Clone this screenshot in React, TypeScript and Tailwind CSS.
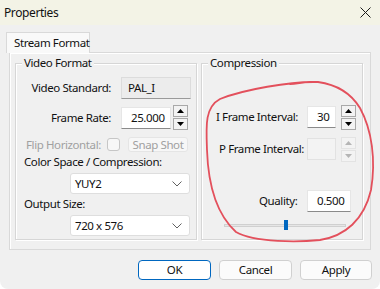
import React from "react";

function Spin({ disabled = false }: { disabled?: boolean }) {
  const box = disabled
    ? "border-[#e3e3e3] bg-[#f3f3f3]"
    : "border-[#a9a9a9] bg-[#f3f3f3]";
  const tri = disabled ? "#b5b5b5" : "#000000";
  return (
    <div className="flex flex-col gap-[1px] w-[15px]">
      <div className={`h-[12px] border flex items-center justify-center ${box}`}>
        <svg width="7" height="4" viewBox="0 0 7 4"><path d="M3.5 0 L7 4 L0 4 Z" fill={tri} /></svg>
      </div>
      <div className={`h-[12px] border flex items-center justify-center ${box}`}>
        <svg width="7" height="4" viewBox="0 0 7 4"><path d="M0 0 L7 0 L3.5 4 Z" fill={tri} /></svg>
      </div>
    </div>
  );
}

function Edit({ value, w, disabled = false }: { value?: string; w: string; disabled?: boolean }) {
  return (
    <div
      className={`${w} h-[22px] flex items-center pl-[9px] border ${
        disabled
          ? "bg-[#f3f3f3] border-[#e2e2e2]"
          : "bg-white border-[#e6e6e6] border-b-[#8a8a8a]"
      }`}
    >
      {value}
    </div>
  );
}

function Select({ value }: { value: string }) {
  return (
    <div className="ml-[54px] w-[120px] h-[21px] bg-white border border-[#dedede] rounded-[3px] flex items-center justify-between pl-[4px] pr-[7px]">
      <span>{value}</span>
      <svg width="10" height="6" viewBox="0 0 10 6" fill="none" stroke="#606060" strokeWidth="1">
        <path d="M0.5 0.5 L5 5 L9.5 0.5" />
      </svg>
    </div>
  );
}

function Group({ title, className, children }: { title: string; className: string; children: React.ReactNode }) {
  return (
    <div className={`relative border border-[#d6d6d6] shadow-[inset_1px_1px_0_#ffffff,1px_1px_0_#ffffff] ${className}`}>
      <span className="absolute -top-[9px] left-[6px] px-[2px] bg-[#f0f0f0] leading-[16px]">{title}</span>
      {children}
    </div>
  );
}

export default function App() {
  return (
    <div className="w-[380px] h-[289px] bg-[#f0f0f0] font-['Noto_Sans',sans-serif] text-[11.5px] tracking-[-0.4px] whitespace-nowrap text-[#111] relative overflow-hidden rounded-b-[8px]">
      <div className="h-[25px] bg-[#f3f3e6] flex items-center justify-between pl-[4px] pr-[9px]">
        <span className="text-[12px]">Properties</span>
        <svg width="11" height="11" viewBox="0 0 11 11" stroke="#1a1a1a" strokeWidth="1">
          <path d="M0.5 0.5 L10.5 10.5 M10.5 0.5 L0.5 10.5" />
        </svg>
      </div>

      <div className="pl-[6px] pt-[7px]">
        <div className="w-[84px] h-[21px] bg-[#f9f9f9] border border-b-0 border-[#d9d9d9] flex items-center pl-[7px] relative z-10">
          Stream Format
        </div>
        <div className="ml-[3px] -mt-[1px] w-[362px] h-[198px] border border-[#d9d9d9] shadow-[inset_1px_1px_0_#ffffff] flex gap-[4px] pl-[5px] pt-[10px]">
          <Group title="Video Format" className="w-[182px] h-[177px]">
            <div className="flex flex-col">
              <div className="mt-[13px] h-[22px] flex items-center">
                <span className="w-[95px] text-right">Video Standard:</span>
                <div className="ml-[10px] w-[70px] h-[22px] bg-[#ececec] border border-[#dcdcdc] border-b-[#9a9a9a] flex items-center pl-[6px]">
                  PAL_I
                </div>
              </div>
              <div className="mt-[6px] h-[25px] flex items-center">
                <span className="w-[95px] text-right">Frame Rate:</span>
                <div className="ml-[10px]">
                  <Edit value="25.000" w="w-[50px]" />
                </div>
                <div className="ml-[2px]">
                  <Spin />
                </div>
              </div>
              <div className="mt-[7px] h-[15px] flex items-center text-[#a0a0a0]">
                <span className="ml-[10px] w-[81px]">Flip Horizontal:</span>
                <div className="w-[13px] h-[13px] bg-[#f7f7f7] border border-[#c6c6c6] rounded-[3px]" />
                <div className="ml-[8px] w-[60px] h-[15px] bg-[#f7f7f7] border border-[#e5e5e5] rounded-[3px] flex items-center justify-center">
                  Snap Shot
                </div>
              </div>
              <div className="mt-[3px] h-[14px] leading-[14px] pl-[8px]">Color Space / Compression:</div>
              <div className="mt-[4px]">
                <Select value="YUY2" />
              </div>
              <div className="mt-[3px] h-[14px] leading-[14px] pl-[8px]">Output Size:</div>
              <div className="mt-[4px]">
                <Select value="720 x 576" />
              </div>
            </div>
          </Group>

          <Group title="Compression" className="w-[162px] h-[177px]">
            <div className="flex flex-col">
              <div className="mt-[40px] h-[26px] flex items-center">
                <span className="ml-[14px] w-[91px]">I Frame Interval:</span>
                <Edit value="30" w="w-[29px]" />
                <div className="ml-[5px]">
                  <Spin />
                </div>
              </div>
              <div className="mt-[6px] h-[26px] flex items-center">
                <span className="ml-[17px] w-[88px]">P Frame Interval:</span>
                <Edit w="w-[29px]" disabled />
                <div className="ml-[5px]">
                  <Spin disabled />
                </div>
              </div>
              <div className="mt-[28px] h-[22px] flex items-center">
                <span className="ml-[57px] w-[48px]">Quality:</span>
                <Edit value="0.500" w="w-[44px]" />
              </div>
              <div className="mt-[8px] ml-[22px] w-[122px] h-[11px] relative flex items-center">
                <div className="w-full h-[3px] bg-[#e6e6e6] border border-[#d0d0d0]" />
                <div className="absolute left-[60px] top-0 w-[4px] h-[10px] bg-[#0067c0]" />
              </div>
            </div>
          </Group>
        </div>
      </div>

      <div className="flex justify-end gap-[8px] pr-[8px] mt-[10px]">
        <button className="w-[73px] h-[20px] bg-white border border-[#0067c0] rounded-[4px] leading-none">OK</button>
        <button className="w-[73px] h-[20px] bg-[#fbfbfb] border border-[#d0d0d0] rounded-[4px] leading-none">Cancel</button>
        <button className="w-[72px] h-[20px] bg-[#fbfbfb] border border-[#d0d0d0] rounded-[4px] leading-none">Apply</button>
      </div>

      <svg className="absolute inset-0 pointer-events-none" width="380" height="289" viewBox="0 0 380 289" fill="none">
        <path
          d="M 313 82 C 290 82, 245 89, 220 99 C 205 107, 206 125, 207 150 C 208 180, 214 212, 236 232 C 255 243, 300 242, 320 240 C 345 236, 364 220, 371 190 C 376 160, 372 130, 360 108 C 352 95, 340 85, 318 82 C 305 81, 298 84, 290 84"
          stroke="#e3505c"
          strokeWidth="1.8"
          strokeLinecap="round"
        />
      </svg>
    </div>
  );
}
